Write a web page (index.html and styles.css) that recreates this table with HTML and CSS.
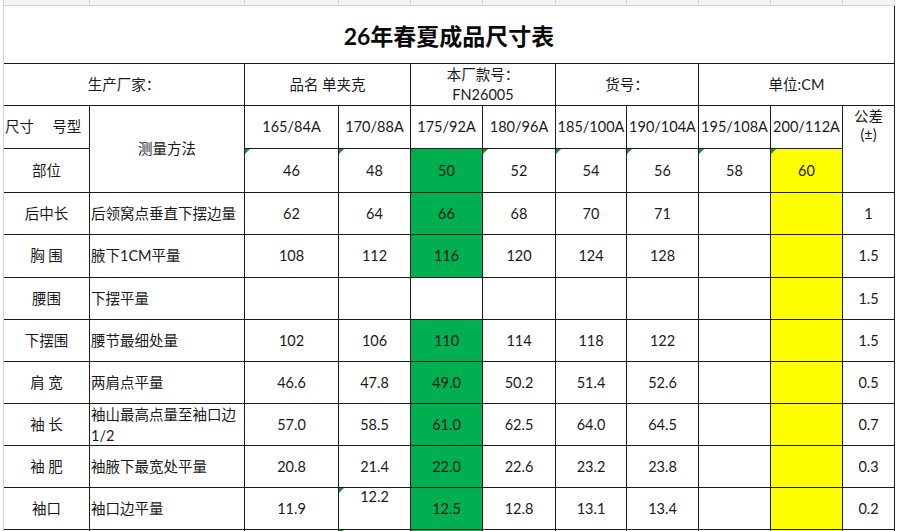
FILE: index.html
```html
<!DOCTYPE html>
<html lang="zh">
<head>
<meta charset="utf-8">
<title>26年春夏成品尺寸表</title>
<link rel="stylesheet" href="styles.css">
</head>
<body>
<div class="sheet">
  <div class="gh"></div><div class="gh"></div><div class="gh"></div><div class="gh"></div><div class="gh"></div><div class="gh"></div><div class="gh"></div><div class="gh"></div><div class="gh"></div><div class="gh"></div><div class="gh"></div>

  <div class="cell title">26年春夏成品尺寸表</div>

  <div class="cell span2">生产厂家：</div>
  <div class="cell span2">品名 单夹克</div>
  <div class="cell span2 two"><span>本厂款号：</span><span>FN26005</span></div>
  <div class="cell span2">货号：</div>
  <div class="cell span3">单位:CM</div>

  <div class="cell left">尺寸　 号型</div>
  <div class="cell rows2">测量方法</div>
  <div class="cell">165/84A</div>
  <div class="cell">170/88A</div>
  <div class="cell">175/92A</div>
  <div class="cell">180/96A</div>
  <div class="cell">185/100A</div>
  <div class="cell">190/104A</div>
  <div class="cell">195/108A</div>
  <div class="cell">200/112A</div>
  <div class="cell rows2 tol"><span>公差</span><span>(±)</span></div>

  <div class="cell">部位</div>
  <div class="cell tri">46</div>
  <div class="cell tri">48</div>
  <div class="cell tri green">50</div>
  <div class="cell tri">52</div>
  <div class="cell tri">54</div>
  <div class="cell tri">56</div>
  <div class="cell tri">58</div>
  <div class="cell tri yellow">60</div>

  <div class="cell">后中长</div>
  <div class="cell left">后领窝点垂直下摆边量</div>
  <div class="cell">62</div><div class="cell">64</div><div class="cell green">66</div><div class="cell">68</div><div class="cell">70</div><div class="cell">71</div><div class="cell"></div><div class="cell yellow"></div>
  <div class="cell">1</div>

  <div class="cell active">胸 围</div>
  <div class="cell left">腋下1CM平量</div>
  <div class="cell">108</div><div class="cell">112</div><div class="cell green">116</div><div class="cell">120</div><div class="cell">124</div><div class="cell">128</div><div class="cell"></div><div class="cell yellow"></div>
  <div class="cell">1.5</div>

  <div class="cell">腰围</div>
  <div class="cell left">下摆平量</div>
  <div class="cell"></div><div class="cell"></div><div class="cell"></div><div class="cell"></div><div class="cell"></div><div class="cell"></div><div class="cell"></div><div class="cell yellow"></div>
  <div class="cell">1.5</div>

  <div class="cell">下摆围</div>
  <div class="cell left">腰节最细处量</div>
  <div class="cell">102</div><div class="cell">106</div><div class="cell green">110</div><div class="cell">114</div><div class="cell">118</div><div class="cell">122</div><div class="cell"></div><div class="cell yellow"></div>
  <div class="cell">1.5</div>

  <div class="cell">肩 宽</div>
  <div class="cell left">两肩点平量</div>
  <div class="cell">46.6</div><div class="cell">47.8</div><div class="cell green">49.0</div><div class="cell">50.2</div><div class="cell">51.4</div><div class="cell">52.6</div><div class="cell"></div><div class="cell yellow"></div>
  <div class="cell">0.5</div>

  <div class="cell">袖 长</div>
  <div class="cell left wrap"><span>袖山最高点量至袖口边1/2</span></div>
  <div class="cell">57.0</div><div class="cell">58.5</div><div class="cell green">61.0</div><div class="cell">62.5</div><div class="cell">64.0</div><div class="cell">64.5</div><div class="cell"></div><div class="cell yellow"></div>
  <div class="cell">0.7</div>

  <div class="cell">袖 肥</div>
  <div class="cell left">袖腋下最宽处平量</div>
  <div class="cell">20.8</div><div class="cell">21.4</div><div class="cell green">22.0</div><div class="cell">22.6</div><div class="cell">23.2</div><div class="cell">23.8</div><div class="cell"></div><div class="cell yellow"></div>
  <div class="cell">0.3</div>

  <div class="cell">袖口</div>
  <div class="cell left">袖口边平量</div>
  <div class="cell">11.9</div><div class="cell tri top">12.2</div><div class="cell green">12.5</div><div class="cell">12.8</div><div class="cell">13.1</div><div class="cell">13.4</div><div class="cell"></div><div class="cell yellow"></div>
  <div class="cell">0.2</div>

  <div class="cell"></div><div class="cell"></div><div class="cell"></div><div class="cell tri"></div><div class="cell green"></div><div class="cell"></div><div class="cell"></div><div class="cell"></div><div class="cell"></div><div class="cell yellow"></div><div class="cell"></div>
</div>
</body>
</html>
```
FILE: styles.css
```css
html, body {
  margin: 0;
  padding: 0;
  background: #ffffff;
  overflow: hidden;
}

body {
  font-family: Lato, "Noto Sans CJK SC", sans-serif;
  font-size: 14.5px;
  color: #1a1a1a;
}

.sheet {
  display: grid;
  margin-left: 3px;
  width: 892px;
  border-left: 1px solid #d4d4d4;
  box-sizing: border-box;
  grid-template-columns: 86px 155px 94px 72px 72px 73px 71px 72px 72px 72px 52px;
  grid-template-rows: 6px 58px 42px 43px 44px 42px 43px 42px 42px 42px 42px 42px 42px 24px;
}

.gh {
  background: #f4f4f4;
  border-right: 1px solid #d6d6d6;
  border-bottom: 1px solid #d4d4d4;
  box-sizing: border-box;
}

.cell {
  position: relative;
  box-sizing: border-box;
  border-right: 1px solid #1c1c1c;
  border-bottom: 1px solid #1c1c1c;
  display: flex;
  align-items: center;
  justify-content: center;
  text-align: center;
  line-height: 20px;
  white-space: nowrap;
  overflow: hidden;
}

.title {
  grid-column: 1 / -1;
  font-size: 23px;
  font-weight: 700;
  color: #0a0a0a;
  padding-top: 3px;
}

.span2 { grid-column: span 2; }
.span3 { grid-column: span 3; }
.rows2 { grid-row: span 2; }

.two {
  flex-direction: column;
  padding-top: 1px;
}

.tol {
  flex-direction: column;
  justify-content: flex-start;
  align-items: center;
  padding-top: 2px;
  line-height: 18px;
}

.left {
  justify-content: flex-start;
  text-align: left;
  padding-left: 1px;
}

.wrap {
  white-space: normal;
  line-height: 21px;
}

.wrap span {
  display: block;
  width: 100%;
}

.top {
  align-items: flex-start;
  padding-top: 0;
  line-height: 18px;
}

.green { background: #00b050; }
.yellow { background: #ffff00; }

.tri::before {
  content: "";
  position: absolute;
  top: 0;
  left: 0;
  width: 0;
  height: 0;
  border-top: 5px solid #1f8f3a;
  border-right: 5px solid transparent;
}

.active::after {
  content: "";
  position: absolute;
  top: 0;
  bottom: -1px;
  left: -2px;
  width: 2px;
  background: #2e9b58;
}
```
